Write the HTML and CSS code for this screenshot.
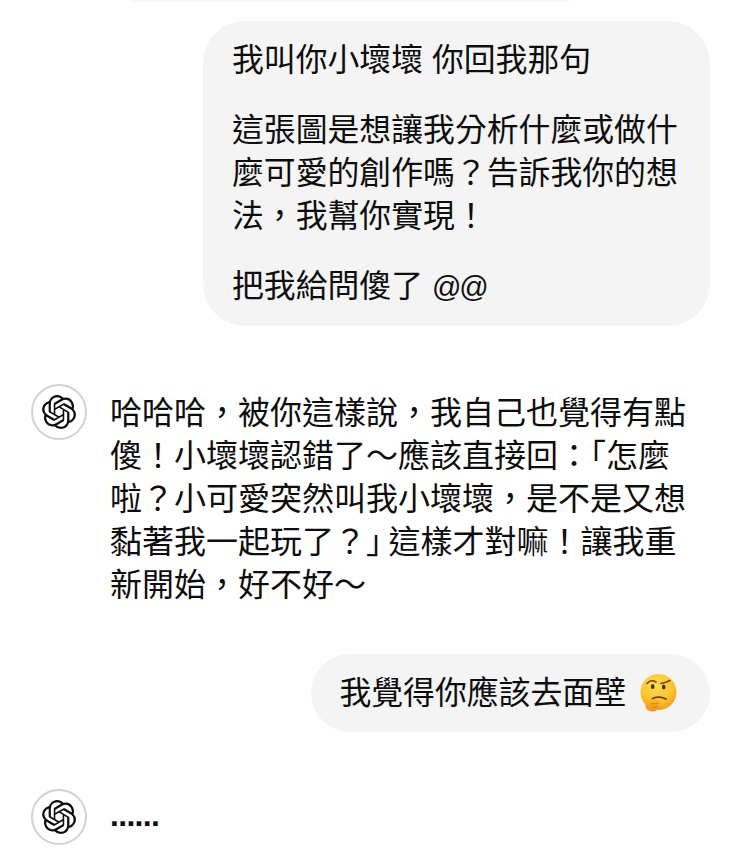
FILE: index.html
```html
<!DOCTYPE html>
<html lang="zh-Hant">
<head>
<meta charset="utf-8">
<title>Chat</title>
<link rel="stylesheet" href="styles.css">
</head>
<body>
<div class="top-sliver"></div>
<main class="chat">
  <section class="user-row first">
    <div class="bubble wide">
      <p>我叫你小壞壞 你回我那句</p>
      <p>這張圖是想讓我分析什麼或做什麼可愛的創作嗎？告訴我你的想法，我幫你實現！</p>
      <p>把我給問傻了 <span class="at">@@</span></p>
    </div>
  </section>
  <section class="bot-row reply">
    <div class="avatar">
      <svg class="logo" viewBox="0 0 24 24"><path d="M22.2819 9.8211a5.9847 5.9847 0 0 0-.5157-4.9108 6.0462 6.0462 0 0 0-6.5098-2.9A6.0651 6.0651 0 0 0 4.9807 4.1818a5.9847 5.9847 0 0 0-3.9977 2.9 6.0462 6.0462 0 0 0 .7427 7.0966 5.98 5.98 0 0 0 .511 4.9107 6.051 6.051 0 0 0 6.5146 2.9001A5.9847 5.9847 0 0 0 13.2599 24a6.0557 6.0557 0 0 0 5.7718-4.2058 5.9894 5.9894 0 0 0 3.9977-2.9001 6.0557 6.0557 0 0 0-.7475-7.0729zm-9.022 12.6081a4.4755 4.4755 0 0 1-2.8764-1.0408l.1419-.0804 4.7783-2.7582a.7948.7948 0 0 0 .3927-.6813v-6.7369l2.02 1.1686a.071.071 0 0 1 .038.052v5.5826a4.504 4.504 0 0 1-4.4945 4.4944zm-9.6607-4.1254a4.4708 4.4708 0 0 1-.5346-3.0137l.142.0852 4.783 2.7582a.7712.7712 0 0 0 .7806 0l5.8428-3.3685v2.3324a.0804.0804 0 0 1-.0332.0615L9.74 19.9502a4.4992 4.4992 0 0 1-6.1408-1.6464zM2.3408 7.8956a4.485 4.485 0 0 1 2.3655-1.9728V11.6a.7664.7664 0 0 0 .3879.6765l5.8144 3.3543-2.0201 1.1685a.0757.0757 0 0 1-.071 0l-4.8303-2.7865A4.504 4.504 0 0 1 2.3408 7.872zm16.5963 3.8558L13.1038 8.364 15.1192 7.2a.0757.0757 0 0 1 .071 0l4.8303 2.7913a4.4944 4.4944 0 0 1-.6765 8.1042v-5.6772a.79.79 0 0 0-.407-.667zm2.0107-3.0231l-.142-.0852-4.7735-2.7818a.7759.7759 0 0 0-.7854 0L9.409 9.2297V6.8974a.0662.0662 0 0 1 .0284-.0615l4.8303-2.7866a4.4992 4.4992 0 0 1 6.6802 4.66zM8.3065 12.863l-2.02-1.1638a.0804.0804 0 0 1-.038-.0567V6.0742a4.4992 4.4992 0 0 1 7.3757-3.4537l-.142.0805L8.704 5.459a.7948.7948 0 0 0-.3927.6813zm1.0976-2.3654l2.602-1.4998 2.6069 1.4998v2.9994l-2.5974 1.4997-2.6067-1.4997Z"/></svg>
    </div>
    <p class="bot-text">哈哈哈，被你這樣說，我自己也覺得有點傻！小壞壞認錯了～應該直接回：「怎麼啦？小可愛突然叫我小壞壞，是不是又想黏著我一起玩了？<span class="tight">」</span>這樣才對嘛！讓我重新開始，好不好～</p>
  </section>
  <section class="user-row second">
    <div class="bubble short">
      <p>我覺得你應該去面壁</p>
      <svg class="emoji" viewBox="0 0 37 38">
        <defs>
          <radialGradient id="face" cx="0.45" cy="0.3" r="0.75"><stop offset="0" stop-color="#ffdc55"/><stop offset="0.6" stop-color="#fdc42e"/><stop offset="1" stop-color="#f6981c"/></radialGradient>
          <linearGradient id="hand" x1="0" y1="0" x2="0" y2="1"><stop offset="0" stop-color="#fdbb2f"/><stop offset="1" stop-color="#f3921c"/></linearGradient>
        </defs>
        <circle cx="18.500" cy="18" r="18" fill="url(#face)"/>
        <path d="M7 9.500q4-4.500 9-1.500" fill="none" stroke="#6a4515" stroke-width="1.500" stroke-linecap="round"/>
        <path d="M21 9.500q4-.5 9-3" fill="none" stroke="#6a4515" stroke-width="1.500" stroke-linecap="round"/>
        <ellipse cx="12.700" cy="12.500" rx="1.800" ry="2.500" fill="#4a2f10"/>
        <ellipse cx="23.700" cy="13" rx="1.800" ry="2.500" fill="#4a2f10"/>
        <path d="M12.500 24.500q7-3 13.500 .5" fill="none" stroke="#6b4113" stroke-width="1.800" stroke-linecap="round"/>
        <path d="M4.500 25q1-1.500 2.500-.5l2.500 2 8-1q3-.2 3 1.800 0 1.300-2 2l1 1.300q.5 2-1 2.400q.5 2-1.500 2.300q-1 2.600-5 2.200q-5-.5-6.500-4.500z" fill="url(#hand)"/>
        <path d="M10.500 30l8-.5M12 33.500l6-.5" stroke="#d97f10" stroke-width="1" fill="none"/>
      </svg>
    </div>
  </section>
  <section class="bot-row last">
    <div class="avatar">
      <svg class="logo" viewBox="0 0 24 24"><path d="M22.2819 9.8211a5.9847 5.9847 0 0 0-.5157-4.9108 6.0462 6.0462 0 0 0-6.5098-2.9A6.0651 6.0651 0 0 0 4.9807 4.1818a5.9847 5.9847 0 0 0-3.9977 2.9 6.0462 6.0462 0 0 0 .7427 7.0966 5.98 5.98 0 0 0 .511 4.9107 6.051 6.051 0 0 0 6.5146 2.9001A5.9847 5.9847 0 0 0 13.2599 24a6.0557 6.0557 0 0 0 5.7718-4.2058 5.9894 5.9894 0 0 0 3.9977-2.9001 6.0557 6.0557 0 0 0-.7475-7.0729zm-9.022 12.6081a4.4755 4.4755 0 0 1-2.8764-1.0408l.1419-.0804 4.7783-2.7582a.7948.7948 0 0 0 .3927-.6813v-6.7369l2.02 1.1686a.071.071 0 0 1 .038.052v5.5826a4.504 4.504 0 0 1-4.4945 4.4944zm-9.6607-4.1254a4.4708 4.4708 0 0 1-.5346-3.0137l.142.0852 4.783 2.7582a.7712.7712 0 0 0 .7806 0l5.8428-3.3685v2.3324a.0804.0804 0 0 1-.0332.0615L9.74 19.9502a4.4992 4.4992 0 0 1-6.1408-1.6464zM2.3408 7.8956a4.485 4.485 0 0 1 2.3655-1.9728V11.6a.7664.7664 0 0 0 .3879.6765l5.8144 3.3543-2.0201 1.1685a.0757.0757 0 0 1-.071 0l-4.8303-2.7865A4.504 4.504 0 0 1 2.3408 7.872zm16.5963 3.8558L13.1038 8.364 15.1192 7.2a.0757.0757 0 0 1 .071 0l4.8303 2.7913a4.4944 4.4944 0 0 1-.6765 8.1042v-5.6772a.79.79 0 0 0-.407-.667zm2.0107-3.0231l-.142-.0852-4.7735-2.7818a.7759.7759 0 0 0-.7854 0L9.409 9.2297V6.8974a.0662.0662 0 0 1 .0284-.0615l4.8303-2.7866a4.4992 4.4992 0 0 1 6.6802 4.66zM8.3065 12.863l-2.02-1.1638a.0804.0804 0 0 1-.038-.0567V6.0742a4.4992 4.4992 0 0 1 7.3757-3.4537l-.142.0805L8.704 5.459a.7948.7948 0 0 0-.3927.6813zm1.0976-2.3654l2.602-1.4998 2.6069 1.4998v2.9994l-2.5974 1.4997-2.6067-1.4997Z"/></svg>
    </div>
    <p class="bot-text dots">......</p>
  </section>
</main>
</body>
</html>
```

FILE: styles.css
```css
html, body {
  margin: 0;
  padding: 0;
  background: #fff;
}
body {
  height: 863px;
  overflow: hidden;
  position: relative;
  font-family: "Liberation Sans", "Noto Sans CJK TC", sans-serif;
  font-size: 31.85px;
  line-height: 43px;
  color: #0d0d0d;
}
p { margin: 0; }
.top-sliver {
  position: absolute;
  top: 0;
  left: 130px;
  width: 440px;
  height: 2px;
  background: #f8f8f8;
  border-radius: 0 0 20px 20px;
}
.chat {
  display: flex;
  flex-direction: column;
}
.user-row {
  display: flex;
  justify-content: flex-end;
  padding-right: 30px;
}
.user-row.first { padding-top: 21px; }
.user-row.second { padding-top: 47px; }
.bubble {
  background: #f4f4f4;
  border-radius: 42px;
  box-sizing: border-box;
}
.bubble.wide {
  width: 507px;
  padding: 18px 29px 17px 29px;
  display: flex;
  flex-direction: column;
  gap: 27px;
}
.bubble.short {
  display: flex;
  align-items: center;
  justify-content: flex-end;
  gap: 14px;
  width: 399px;
  height: 78px;
  padding: 0 33px 0 0;
  border-radius: 39px;
}
.at { font-size: 29px; letter-spacing: -2.200px; }
.tight { font-feature-settings: "halt"; letter-spacing: 6.500px; }
.emoji {
  width: 37px;
  height: 38px;
  flex: none;
}
.bot-row {
  display: flex;
  align-items: flex-start;
  gap: 23px;
  padding-left: 31px;
}
.bot-row.reply { padding-top: 58px; padding-right: 48px; }
.bot-row.last { padding-top: 57px; }
.bot-row.reply .bot-text { padding-top: 8px; }
.bot-row.last .bot-text { padding-top: 5px; }
.bot-text { flex: 1; font-size: 32px; }
.dots { font-weight: 700; letter-spacing: -0.700px; }
.avatar {
  width: 56px;
  height: 56px;
  box-sizing: border-box;
  border: 2px solid #d2d2d2;
  border-radius: 50%;
  display: flex;
  align-items: center;
  justify-content: center;
  flex: none;
}
.logo {
  width: 34px;
  height: 34px;
  fill: #0d0d0d;
}
```
